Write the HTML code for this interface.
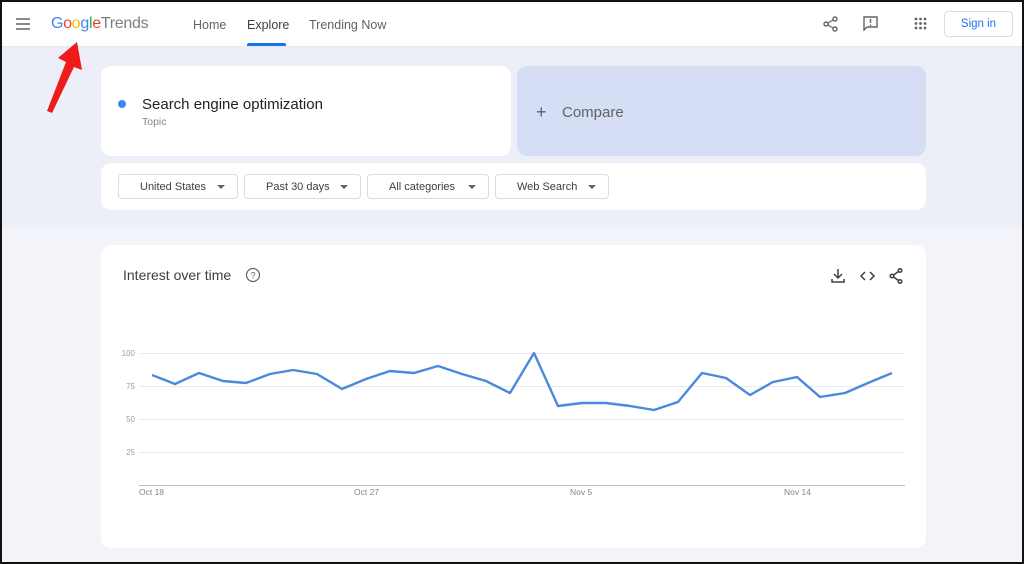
<!DOCTYPE html>
<html><head><meta charset="utf-8"><style>
*{margin:0;padding:0;box-sizing:border-box}
body{width:1024px;height:564px;overflow:hidden;font-family:"Liberation Sans",Arial,sans-serif;background:#fff;position:relative}
.frame{position:absolute;inset:0;border:2px solid #111;pointer-events:none;z-index:10}
.top{position:absolute;left:0;top:0;width:1024px;height:47px;background:#fff;border-bottom:1px solid #e3e6ee}
.bg1{position:absolute;left:0;top:47px;width:1024px;height:180px;background:#eceff8}
.bg2{position:absolute;left:0;top:227px;width:1024px;height:337px;background:#f3f4fa}
.card{position:absolute;background:#fff;border-radius:10px}
.nav{position:absolute;top:18px;font-size:12.5px;color:#5f6368}
.dd{position:absolute;top:174px;height:25px;border:1px solid #dadce0;border-radius:4px;font-size:11px;color:#3c4043;line-height:25px;padding-left:21px}
.dd:after{content:"";position:absolute;right:12px;top:10px;border:4px solid transparent;border-top:4px solid #5f6368;border-bottom:0}
</style></head><body>
<div class="top"></div>
<div class="bg1"></div><div class="bg2"></div>
<svg style="position:absolute;left:16px;top:18px" width="14" height="12"><path d="M0 1h14M0 6h14M0 11h14" stroke="#5f6368" stroke-width="1.6"/></svg>
<div style="position:absolute;left:51px;top:15px;font-size:16px;letter-spacing:-0.3px"><span style="color:#4285f4">G</span><span style="color:#ea4335">o</span><span style="color:#fbbc05">o</span><span style="color:#4285f4">g</span><span style="color:#34a853">l</span><span style="color:#ea4335">e</span><span style="color:#7a7d82">Trends</span></div>
<div class="nav" style="left:193px">Home</div>
<div class="nav" style="left:247px;color:#3c4043">Explore</div>
<div style="position:absolute;left:247px;top:43px;width:39px;height:3px;background:#1a73e8;border-radius:2px 2px 0 0"></div>
<div class="nav" style="left:309px">Trending Now</div>
<svg style="position:absolute;left:823px;top:16px" width="15" height="16"><circle cx="12" cy="3" r="2" fill="none" stroke="#5f6368" stroke-width="1.4"/><circle cx="3" cy="8" r="2" fill="none" stroke="#5f6368" stroke-width="1.4"/><circle cx="12" cy="13" r="2" fill="none" stroke="#5f6368" stroke-width="1.4"/><path d="M5 7l5-3M5 9l5 3" stroke="#5f6368" stroke-width="1.3"/></svg>
<svg style="position:absolute;left:863px;top:16px" width="15" height="15"><path d="M1 1h13v10H4l-3 3z" fill="none" stroke="#5f6368" stroke-width="1.4"/><path d="M7.5 3v4M7.5 8.5v1.5" stroke="#5f6368" stroke-width="1.4"/></svg>
<svg style="position:absolute;left:914px;top:17px" width="13" height="13" fill="#5f6368"><circle cx="2" cy="2" r="1.4"/><circle cx="6.5" cy="2" r="1.4"/><circle cx="11" cy="2" r="1.4"/><circle cx="2" cy="6.5" r="1.4"/><circle cx="6.5" cy="6.5" r="1.4"/><circle cx="11" cy="6.5" r="1.4"/><circle cx="2" cy="11" r="1.4"/><circle cx="6.5" cy="11" r="1.4"/><circle cx="11" cy="11" r="1.4"/></svg>
<div style="position:absolute;left:944px;top:11px;width:69px;height:26px;border:1px solid #dadce0;border-radius:4px;color:#1a73e8;font-size:11.5px;text-align:center;line-height:24px">Sign in</div>
<svg style="position:absolute;left:44px;top:40px" width="40" height="75"><path d="M33 2L38 30 L30 27 L8 73 L3 71 L22 22 L14 18Z" fill="#f01b1b"/></svg>
<div class="card" style="left:101px;top:66px;width:410px;height:90px"></div>
<div style="position:absolute;left:118px;top:100px;width:8px;height:8px;border-radius:50%;background:#4285f4"></div>
<div style="position:absolute;left:142px;top:96px;font-size:15px;color:#202124">Search engine optimization</div>
<div style="position:absolute;left:142px;top:116px;font-size:10.5px;color:#80868b">Topic</div>
<div style="position:absolute;left:517px;top:66px;width:409px;height:90px;background:#d5def5;border-radius:10px"></div>
<div style="position:absolute;left:536px;top:102px;font-size:18px;color:#5f6368">+</div>
<div style="position:absolute;left:562px;top:104px;font-size:15px;color:#5f6368">Compare</div>
<div class="card" style="left:101px;top:163px;width:825px;height:47px"></div>
<div class="dd" style="left:118px;width:120px">United States</div>
<div class="dd" style="left:244px;width:117px">Past 30 days</div>
<div class="dd" style="left:367px;width:122px">All categories</div>
<div class="dd" style="left:495px;width:114px">Web Search</div>
<div class="card" style="left:101px;top:245px;width:825px;height:303px"></div>
<div style="position:absolute;left:123px;top:267px;font-size:14px;color:#3c4043">Interest over time</div>
<svg style="position:absolute;left:245px;top:267px" width="16" height="16"><circle cx="8" cy="8" r="6.5" fill="none" stroke="#5f6368" stroke-width="1.2"/><text x="8" y="11.5" font-size="9" text-anchor="middle" fill="#5f6368" font-family="Liberation Sans">?</text></svg>
<svg style="position:absolute;left:830px;top:268px" width="76" height="16" fill="none" stroke="#3c4043" stroke-width="1.5"><path d="M8 1v9M4 6l4 4 4-4M2 11v3h12v-3"/><path d="M35 4l-4 4 4 4M40 4l4 4-4 4"/><circle cx="70" cy="2.5" r="1.8"/><circle cx="62" cy="8" r="1.8"/><circle cx="70" cy="13.5" r="1.8"/><path d="M63.5 7l5-3.5M63.5 9l5 3.5"/></svg>
<svg style="position:absolute;left:0;top:0" width="1024" height="564">
<g stroke="#e8eaed" stroke-width="1"><path d="M139 353.5H905M139 386.5H905M139 419.5H905M139 452.5H905"/></g>
<path d="M139 485.5H905" stroke="#bdc1c6"/>
<g font-size="8" fill="#9aa0a6" font-family="Liberation Sans" text-anchor="end"><text x="135" y="356">100</text><text x="135" y="389">75</text><text x="135" y="422">50</text><text x="135" y="455">25</text></g>
<g font-size="8.5" fill="#80868b" font-family="Liberation Sans"><text x="139" y="495">Oct 18</text><text x="354" y="495">Oct 27</text><text x="570" y="495">Nov 5</text><text x="784" y="495">Nov 14</text></g>
<polyline fill="none" stroke="#4a89dc" stroke-width="2.4" stroke-linejoin="round" points="152,375 175,384 199,373 223,381 246,383 270,374 293,370 317,374 342,389 366,379 390,371 414,373 438,366 462,374 486,381 510,393 534,353 558,406 582,403 606,403 630,406 654,410 678,402 702,373 726,378 750,395 773,382 797,377 820,397 845,393 868,383 892,373"/>
</svg>
<div class="frame"></div>
</body></html>
